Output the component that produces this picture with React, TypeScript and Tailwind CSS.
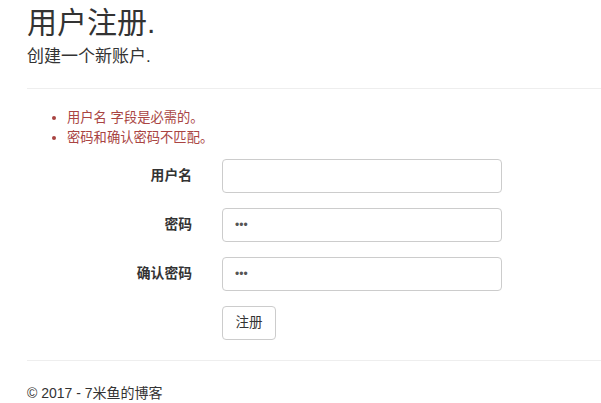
export default function App() {
  const font = { fontFamily: '"Liberation Sans", "Noto Sans CJK SC", sans-serif' };
  return (
    <div style={font} className="min-h-[403px] bg-white pl-[27px] text-[#333]">
      <h2 className="pt-[6px] text-[30px] leading-[33px] font-normal">用户注册.</h2>
      <h4 className="mt-[8px] text-[17px] leading-[20px] font-normal">创建一个新账户.</h4>
      <hr className="mt-[21px] border-t border-[#eee]" />

      <ul className="mt-[19px] list-disc pl-[40px] text-[13.3px] leading-[20px] text-[#a94442]">
        <li>用户名 字段是必需的。</li>
        <li>密码和确认密码不匹配。</li>
      </ul>

      <form className="mt-[11px] flex flex-col gap-[15px]" onSubmit={(e) => e.preventDefault()}>
        <div className="flex items-center">
          <label className="w-[165px] text-right text-[13.8px] font-bold">用户名</label>
          <input
            type="text"
            className="ml-[30px] h-[34px] w-[280px] rounded-[4px] border border-[#ccc] px-[12px] text-[14px] outline-none"
          />
        </div>
        <div className="flex items-center">
          <label className="w-[165px] text-right text-[13.8px] font-bold">密码</label>
          <input
            type="password"
            defaultValue="abc"
            className="ml-[30px] h-[34px] w-[280px] rounded-[4px] border border-[#ccc] px-[12px] text-[12px] text-[#555] outline-none"
          />
        </div>
        <div className="flex items-center">
          <label className="w-[165px] text-right text-[13.8px] font-bold">确认密码</label>
          <input
            type="password"
            defaultValue="abc"
            className="ml-[30px] h-[34px] w-[280px] rounded-[4px] border border-[#ccc] px-[12px] text-[12px] text-[#555] outline-none"
          />
        </div>
        <div className="flex">
          <button
            type="submit"
            className="ml-[195px] h-[34px] w-[54px] rounded-[4px] border border-[#ccc] bg-white text-[13.5px] text-[#333]"
          >
            注册
          </button>
        </div>
      </form>

      <hr className="mt-[20px] border-t border-[#eee]" />
      <footer className="mt-[22px] text-[14px] leading-[20px]">
        <p>© 2017 - 7米鱼的博客</p>
      </footer>
    </div>
  );
}
